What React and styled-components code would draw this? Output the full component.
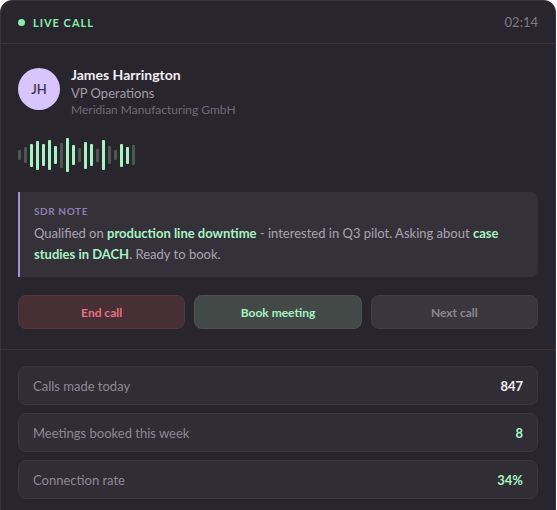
import React from 'react';
import styled, { createGlobalStyle } from 'styled-components';

const GlobalStyle = createGlobalStyle`
    html, body {
        margin: 0;
        padding: 0;
        background: #ffffff;
    }
    body {
        font-family: Lato, "Liberation Sans", sans-serif;
    }
`;

const Card = styled.section`
    width: 556px;
    box-sizing: border-box;
    background: #29252c;
    border: 1px solid #38343c;
    border-radius: 12px;
    color: #eeeaf2;
    min-height: 560px;
`;

const Header = styled.header`
    display: flex;
    align-items: center;
    justify-content: space-between;
    height: 42px;
    padding: 0 17px;
    border-bottom: 1px solid #3a363e;
`;

const Live = styled.div`
    display: flex;
    align-items: center;
    gap: 8px;
    font-size: 11px;
    font-weight: 700;
    letter-spacing: 1px;
    color: #86efac;
`;

const Dot = styled.span`
    width: 7px;
    height: 7px;
    border-radius: 50%;
    background: #86efac;
`;

const Timer = styled.span`
    font-size: 13px;
    color: #7f7b85;
`;

const Body = styled.div`
    padding: 22px 17px 20px;
    border-bottom: 1px solid #36323a;
`;

const Contact = styled.div`
    display: flex;
    align-items: flex-start;
    gap: 11px;
`;

const Avatar = styled.div`
    width: 42px;
    height: 42px;
    margin-top: 2px;
    border-radius: 50%;
    background: #d6c6fd;
    color: #3d3650;
    font-size: 13px;
    font-weight: 600;
    display: flex;
    align-items: center;
    justify-content: center;
`;

const Info = styled.div`
    display: flex;
    flex-direction: column;
`;

const Name = styled.div`
    font-size: 14px;
    font-weight: 700;
    color: #f1eef5;
    line-height: 18px;
`;

const Role = styled.div`
    font-size: 13px;
    color: #a29da9;
    line-height: 18px;
`;

const Company = styled.div`
    font-size: 12px;
    color: #6f6a76;
    line-height: 16px;
`;

const Wave = styled.div`
    display: flex;
    align-items: center;
    gap: 3px;
    height: 36px;
    margin-top: 19px;
`;

const Bar = styled.span`
    width: 3px;
    border-radius: 1px;
    background: ${p => (p.$on ? '#a7f3c4' : '#4c5750')};
`;

const Note = styled.div`
    margin-top: 19px;
    background: #353139;
    border-left: 2px solid #a48fd6;
    border-radius: 0 8px 8px 0;
    padding: 12px 14px;
`;

const NoteLabel = styled.div`
    font-size: 10px;
    line-height: 14px;
    font-weight: 700;
    letter-spacing: 0.6px;
    color: #8d7fb0;
    text-transform: uppercase;
    margin-bottom: 5px;
`;

const NoteText = styled.p`
    margin: 0;
    font-size: 13px;
    line-height: 21px;
    color: #a9a4b0;

    strong {
        color: #a7f3c4;
        font-weight: 700;
    }
`;

const Actions = styled.div`
    display: grid;
    grid-template-columns: repeat(3, 1fr);
    gap: 9px;
    margin-top: 18px;
`;

const tones = {
    end: { bg: '#482e35', border: '#523840', color: '#e5737d' },
    book: { bg: '#434946', border: '#4c524f', color: '#a7f3c4' },
    next: { bg: '#3a363d', border: '#423e45', color: '#8a8690' },
};

const Button = styled.button`
    height: 34px;
    border-radius: 8px;
    border: 1px solid ${p => tones[p.$tone].border};
    background: ${p => tones[p.$tone].bg};
    color: ${p => tones[p.$tone].color};
    font-family: inherit;
    font-size: 12px;
    font-weight: 700;
    cursor: pointer;
`;

const Stats = styled.div`
    display: flex;
    flex-direction: column;
    gap: 8px;
    padding: 16px 17px;
`;

const Stat = styled.div`
    display: flex;
    align-items: center;
    justify-content: space-between;
    height: 39px;
    box-sizing: border-box;
    padding: 0 14px;
    background: #312d34;
    border: 1px solid #3b373f;
    border-radius: 8px;
`;

const StatLabel = styled.span`
    font-size: 13px;
    color: #8e8995;
`;

const StatValue = styled.span`
    font-size: 13px;
    font-weight: 700;
    color: ${p => (p.$accent ? '#a7f3c4' : '#f1eef5')};
`;

const bars = [
    [10, 0], [16, 0], [23, 1], [29, 1], [22, 1], [30, 1], [18, 1], [25, 0], [34, 1], [20, 1],
    [14, 0], [27, 1], [22, 1], [13, 0], [30, 1], [18, 0], [10, 0], [23, 1], [17, 1], [20, 0],
];

const stats = [
    { label: 'Calls made today', value: '847' },
    { label: 'Meetings booked this week', value: '8', accent: true },
    { label: 'Connection rate', value: '34%', accent: true },
];

function App() {
    return (
        <>
            <GlobalStyle />
            <Card>
                <Header>
                    <Live><Dot />LIVE CALL</Live>
                    <Timer>02:14</Timer>
                </Header>
                <Body>
                    <Contact>
                        <Avatar>JH</Avatar>
                        <Info>
                            <Name>James Harrington</Name>
                            <Role>VP Operations</Role>
                            <Company>Meridian Manufacturing GmbH</Company>
                        </Info>
                    </Contact>
                    <Wave>
                        {bars.map(([h, on], i) => (
                            <Bar key={i} $on={on} style={{ height: h }} />
                        ))}
                    </Wave>
                    <Note>
                        <NoteLabel>SDR Note</NoteLabel>
                        <NoteText>
                            Qualified on <strong>production line downtime</strong> - interested in Q3 pilot. Asking about <strong>case studies in DACH</strong>. Ready to book.
                        </NoteText>
                    </Note>
                    <Actions>
                        <Button $tone="end">End call</Button>
                        <Button $tone="book">Book meeting</Button>
                        <Button $tone="next">Next call</Button>
                    </Actions>
                </Body>
                <Stats>
                    {stats.map(s => (
                        <Stat key={s.label}>
                            <StatLabel>{s.label}</StatLabel>
                            <StatValue $accent={s.accent}>{s.value}</StatValue>
                        </Stat>
                    ))}
                </Stats>
            </Card>
        </>
    );
}

export default App;
